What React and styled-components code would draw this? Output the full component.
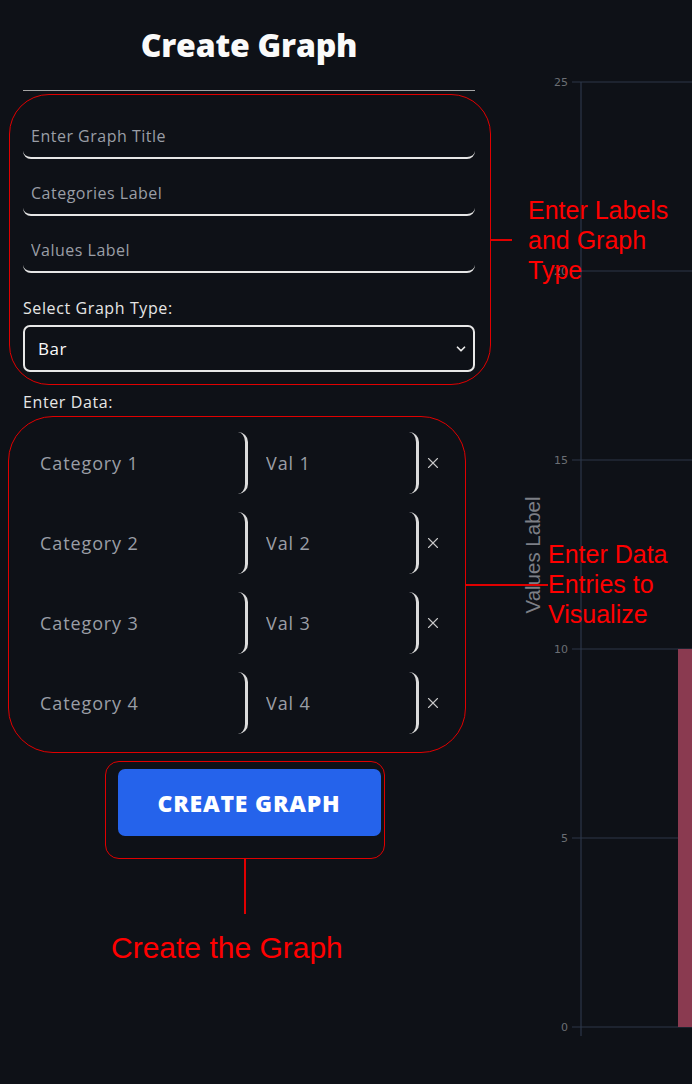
import React, { useState } from "react";
import styled, { createGlobalStyle } from "styled-components";
import { X, ChevronDown } from "lucide-react";

const GlobalStyle = createGlobalStyle`
  html, body {
    margin: 0;
    padding: 0;
    background: #0e1117;
  }
  * { box-sizing: border-box; }
`;

const Page = styled.div`
  position: relative;
  display: flex;
  width: 692px;
  height: 1084px;
  overflow: hidden;
  background: #0e1117;
  font-family: "Open Sans", "Noto Sans", sans-serif;
  color: #fafafa;
`;

const Panel = styled.div`
  width: 452px;
  margin-left: 23px;
  display: flex;
  flex-direction: column;
`;

const Title = styled.h1`
  margin: 0;
  height: 91px;
  padding-top: 25px;
  font-size: 32px;
  line-height: 40px;
  font-weight: 800;
  text-align: center;
  border-bottom: 1px solid #a5a5a5;
  letter-spacing: -0.2px;
`;

const LineInput = styled.input`
  height: 44px;
  margin-top: ${(p) => p.$gap}px;
  padding: 0 8px;
  background: transparent;
  border: none;
  border-bottom: 2px solid #e6e6e6;
  border-radius: 0 0 8px 8px;
  color: #fafafa;
  font-family: inherit;
  font-size: 16px;
  letter-spacing: 0.5px;
  outline: none;
  &::placeholder { color: #9a9ea6; }
`;

const FieldLabel = styled.div`
  margin-top: ${(p) => p.$gap}px;
  font-size: 16px;
  line-height: 20px;
  letter-spacing: 0.6px;
  color: #e6e6e6;
`;

const SelectWrap = styled.div`
  position: relative;
  margin-top: 7px;
  height: 47px;
`;

const Select = styled.select`
  appearance: none;
  width: 100%;
  height: 100%;
  padding: 0 13px;
  background: #0e1117;
  border: 2px solid #e8e8e8;
  border-radius: 7px;
  color: #fafafa;
  font-family: inherit;
  font-size: 17px;
  letter-spacing: 0.5px;
  outline: none;
`;

const Chevron = styled(ChevronDown)`
  position: absolute;
  right: 7px;
  top: 17px;
  pointer-events: none;
`;

const Rows = styled.div`
  margin-top: 20px;
  display: flex;
  flex-direction: column;
  gap: 18px;
`;

const Row = styled.div`
  display: flex;
  align-items: center;
  height: 62px;
`;

const CellInput = styled.input`
  width: ${(p) => p.$w}px;
  height: 62px;
  margin-left: ${(p) => p.$ml || 0}px;
  padding: 0 16px;
  background: transparent;
  border: none;
  border-right: 3px solid #dcdcdc;
  border-radius: 0 10px 10px 0;
  color: #fafafa;
  font-family: inherit;
  font-size: 18px;
  letter-spacing: 0.9px;
  outline: none;
  &::placeholder { color: #9a9ea6; }
`;

const RemoveBtn = styled.button`
  margin-left: 5px;
  padding: 0;
  display: flex;
  background: none;
  border: none;
  color: #c8c8c8;
  cursor: pointer;
`;

const CreateButton = styled.button`
  align-self: center;
  margin-top: 35px;
  width: 263px;
  height: 67px;
  background: #2563eb;
  border: none;
  border-radius: 7px;
  color: #fff;
  font-family: inherit;
  font-size: 23px;
  font-weight: 800;
  letter-spacing: 0.8px;
  text-transform: uppercase;
  cursor: pointer;
`;

const ChartArea = styled.div`
  flex: 1;
`;

/* red annotation overlay */
const Callout = styled.div`
  position: absolute;
  left: ${(p) => p.$x}px;
  top: ${(p) => p.$y}px;
  width: ${(p) => p.$w}px;
  height: ${(p) => p.$h}px;
  border: 1.5px solid #e00000;
  border-radius: ${(p) => p.$r}px;
  pointer-events: none;
`;

const Leader = styled.div`
  position: absolute;
  left: ${(p) => p.$x}px;
  top: ${(p) => p.$y}px;
  width: ${(p) => p.$w}px;
  height: ${(p) => p.$h}px;
  background: #e00000;
`;

const Note = styled.div`
  position: absolute;
  left: ${(p) => p.$x}px;
  top: ${(p) => p.$y}px;
  font-family: "Liberation Sans", Arial, sans-serif;
  font-size: ${(p) => p.$size}px;
  line-height: ${(p) => p.$lh}px;
  color: #ff0000;
  white-space: nowrap;
`;

const ticks = [25, 20, 15, 10, 5, 0];
const y0 = 1027;
const unit = 37.8;

function Chart() {
  return (
    <svg width="217" height="1084" viewBox="475 0 217 1084">
      {ticks.map((t) => {
        const y = y0 - t * unit;
        return (
          <g key={t}>
            <line x1="572" x2="692" y1={y} y2={y} stroke="#2c3648" strokeWidth="1" />
            <text x="568" y={y + 4} textAnchor="end" fontSize="11" fill="#6b6e74"
              fontFamily="DejaVu Sans, sans-serif">{t}</text>
          </g>
        );
      })}
      <line x1="581" x2="581" y1={y0 - 25 * unit} y2="1036" stroke="#2c3648" strokeWidth="1.2" />
      <rect x="678" y={y0 - 10 * unit} width="20" height={10 * unit} fill="#8a3a50" />
      <text transform="translate(540 555) rotate(-90)" textAnchor="middle" fontSize="20.5"
        fill="#7c7f86" fontFamily="Liberation Sans, Arial, sans-serif">Values Label</text>
    </svg>
  );
}

export default function App() {
  const [rows, setRows] = useState([1, 2, 3, 4]);

  return (
    <Page>
      <GlobalStyle />
      <Panel>
        <Title>Create Graph</Title>
        <LineInput $gap={24} placeholder="Enter Graph Title" />
        <LineInput $gap={13} placeholder="Categories Label" />
        <LineInput $gap={13} placeholder="Values Label" />
        <FieldLabel $gap={25}>Select Graph Type:</FieldLabel>
        <SelectWrap>
          <Select defaultValue="Bar">
            <option>Bar</option>
            <option>Line</option>
            <option>Pie</option>
          </Select>
          <Chevron size={14} strokeWidth={3} color="#e8e8e8" />
        </SelectWrap>
        <FieldLabel $gap={20}>Enter Data:</FieldLabel>
        <Rows>
          {rows.map((n) => (
            <Row key={n}>
              <CellInput $w={224} $ml={1} placeholder={`Category ${n}`} />
              <CellInput $w={169} $ml={2} placeholder={`Val ${n}`} />
              <RemoveBtn onClick={() => setRows(rows.filter((r) => r !== n))}>
                <X size={18} strokeWidth={1.5} />
              </RemoveBtn>
            </Row>
          ))}
        </Rows>
        <CreateButton>Create Graph</CreateButton>
      </Panel>
      <ChartArea>
        <Chart />
      </ChartArea>

      <Callout $x={9} $y={94} $w={482} $h={291} $r={40} />
      <Leader $x={491} $y={239} $w={21} $h={1.5} />
      <Note $x={528} $y={195} $size={25} $lh={30}>
        Enter Labels<br />and Graph<br />Type
      </Note>

      <Callout $x={8} $y={416} $w={458} $h={337} $r={45} />
      <Leader $x={466} $y={584} $w={82} $h={1.5} />
      <Note $x={548} $y={539} $size={25} $lh={30}>
        Enter Data<br />Entries to<br />Visualize
      </Note>

      <Callout $x={105} $y={761} $w={280} $h={98} $r={14} />
      <Leader $x={244} $y={859} $w={1.5} $h={55} />
      <Note $x={111} $y={929} $size={30} $lh={38}>Create the Graph</Note>
    </Page>
  );
}
